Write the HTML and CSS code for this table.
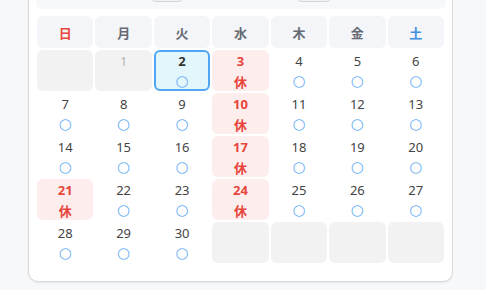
FILE: index.html
```html
<!DOCTYPE html>
<html lang="ja">
<head>
<meta charset="utf-8">
<link rel="stylesheet" href="styles.css">
</head>
<body>
<div class="page">
  <div class="card">
    <div class="toolbar">
      <button class="nav-btn prev" aria-label="前の月"></button>
      <span class="title"></span>
      <button class="nav-btn next" aria-label="次の月"></button>
    </div>
    <div class="grid">
      <div class="head sun">日</div>
      <div class="head">月</div>
      <div class="head">火</div>
      <div class="head">水</div>
      <div class="head">木</div>
      <div class="head">金</div>
      <div class="head sat">土</div>

      <div class="cell empty"></div>
      <div class="cell past"><span class="num">1</span></div>
      <div class="cell selected"><span class="num">2</span><span class="mark">○</span></div>
      <div class="cell holiday"><span class="num">3</span><span class="mark">休</span></div>
      <div class="cell"><span class="num">4</span><span class="mark">○</span></div>
      <div class="cell"><span class="num">5</span><span class="mark">○</span></div>
      <div class="cell"><span class="num">6</span><span class="mark">○</span></div>

      <div class="cell"><span class="num">7</span><span class="mark">○</span></div>
      <div class="cell"><span class="num">8</span><span class="mark">○</span></div>
      <div class="cell"><span class="num">9</span><span class="mark">○</span></div>
      <div class="cell holiday"><span class="num">10</span><span class="mark">休</span></div>
      <div class="cell"><span class="num">11</span><span class="mark">○</span></div>
      <div class="cell"><span class="num">12</span><span class="mark">○</span></div>
      <div class="cell"><span class="num">13</span><span class="mark">○</span></div>

      <div class="cell"><span class="num">14</span><span class="mark">○</span></div>
      <div class="cell"><span class="num">15</span><span class="mark">○</span></div>
      <div class="cell"><span class="num">16</span><span class="mark">○</span></div>
      <div class="cell holiday"><span class="num">17</span><span class="mark">休</span></div>
      <div class="cell"><span class="num">18</span><span class="mark">○</span></div>
      <div class="cell"><span class="num">19</span><span class="mark">○</span></div>
      <div class="cell"><span class="num">20</span><span class="mark">○</span></div>

      <div class="cell holiday"><span class="num">21</span><span class="mark">休</span></div>
      <div class="cell"><span class="num">22</span><span class="mark">○</span></div>
      <div class="cell"><span class="num">23</span><span class="mark">○</span></div>
      <div class="cell holiday"><span class="num">24</span><span class="mark">休</span></div>
      <div class="cell"><span class="num">25</span><span class="mark">○</span></div>
      <div class="cell"><span class="num">26</span><span class="mark">○</span></div>
      <div class="cell"><span class="num">27</span><span class="mark">○</span></div>

      <div class="cell"><span class="num">28</span><span class="mark">○</span></div>
      <div class="cell"><span class="num">29</span><span class="mark">○</span></div>
      <div class="cell"><span class="num">30</span><span class="mark">○</span></div>
      <div class="cell empty"></div>
      <div class="cell empty"></div>
      <div class="cell empty"></div>
      <div class="cell empty"></div>
    </div>
  </div>
</div>
</body>
</html>
```
FILE: styles.css
```css
html, body {
  margin: 0;
  padding: 0;
  background: #f7f8fa;
  font-family: "Noto Sans", "Noto Sans CJK JP", sans-serif;
}
.page {
  padding-left: 28px;
  width: 425px;
  overflow: hidden;
  height: 290px;
}
.card {
  margin-top: -40px;
  background: #fff;
  border: 1px solid #d9d9d9;
  border-radius: 10px;
  padding: 8px 8px 18px 8px;
  box-shadow: 0 1px 2px rgba(0,0,0,0.08);
}
.toolbar {
  height: 40px;
  margin: 0 -2px 7px -1px;
  background: #f7f8fa;
  border-radius: 6px;
  display: flex;
  justify-content: center;
  align-items: flex-end;
  padding-bottom: 7px;
  box-sizing: border-box;
}
.nav-btn {
  height: 26px;
  width: 34px;
  border: 1px solid #d4d4d4;
  border-radius: 6px;
  background: #f2f2f2;
  padding: 0;
}
.next { width: 36px; }
.title {
  width: 112px;
}
.grid {
  display: grid;
  grid-template-columns: repeat(7, 1fr);
  grid-template-rows: 32px repeat(5, 41px);
  gap: 2px;
}
.head {
  background: #f3f5f8;
  border-radius: 6px;
  display: flex;
  align-items: center;
  justify-content: center;
  font-family: "Noto Sans CJK JP", sans-serif;
  font-size: 13px;
  font-weight: 700;
  color: #666a73;
}
.head.sun { color: #e8453c; }
.head.sat { color: #3d8fe0; }
.cell {
  border-radius: 6px;
  display: flex;
  flex-direction: column;
  align-items: center;
  font-size: 13px;
  line-height: 20px;
  color: #444;
  box-sizing: border-box;
  padding-top: 1px;
}
.mark {
  color: #66adf5;
  font-family: "DejaVu Sans", sans-serif;
  font-size: 15px;
  line-height: 20px;
}
.empty { background: #f2f2f2; }
.past { background: #f2f2f2; }
.past .num { color: #b5b5b5; }
.selected {
  background: #e2f6fb;
  border: 2px solid #4fa6f2;
  padding-top: 0;
}
.selected .num { font-weight: 700; color: #333; margin-top: -1px; }
.holiday {
  background: #fdeeed;
  color: #e8453c;
  font-weight: 700;
}
.holiday .mark {
  color: #e8453c;
  font-family: "Noto Sans CJK JP", sans-serif;
  font-size: 13px;
  line-height: 22px;
}
```
